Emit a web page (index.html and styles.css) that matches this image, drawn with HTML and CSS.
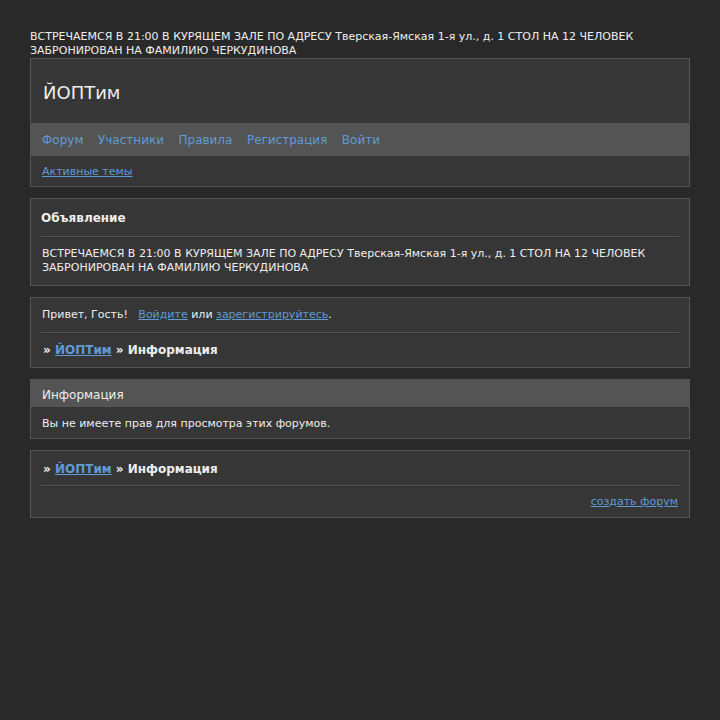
FILE: index.html
```html
<!DOCTYPE html>
<html>
<head>
<meta charset="utf-8">
<link rel="stylesheet" href="styles.css">
</head>
<body>
<div class="page">
  <div class="topnote">ВСТРЕЧАЕМСЯ В 21:00 В КУРЯЩЕМ ЗАЛЕ ПО АДРЕСУ Тверская-Ямская 1-я ул., д. 1 СТОЛ НА 12 ЧЕЛОВЕК ЗАБРОНИРОВАН НА ФАМИЛИЮ ЧЕРКУДИНОВА</div>
  <div class="box header">
    <div class="title">ЙОПТим</div>
    <div class="nav">
      <a>Форум</a><a>Участники</a><a>Правила</a><a>Регистрация</a><a>Войти</a>
    </div>
    <div class="subnav"><a class="ul">Активные темы</a></div>
  </div>

  <div class="box pad">
    <div class="heading">Объявление</div>
    <div class="rule"></div>
    <div class="announce">ВСТРЕЧАЕМСЯ В 21:00 В КУРЯЩЕМ ЗАЛЕ ПО АДРЕСУ Тверская-Ямская 1-я ул., д. 1 СТОЛ НА 12 ЧЕЛОВЕК ЗАБРОНИРОВАН НА ФАМИЛИЮ ЧЕРКУДИНОВА</div>
  </div>

  <div class="box pad">
    <div class="welcome">Привет, Гость!&nbsp;&nbsp; <a class="ul">Войдите</a> или <a class="ul">зарегистрируйтесь</a>.</div>
    <div class="rule"></div>
    <div class="crumbs">» <a class="ul">ЙОПТим</a> » Информация</div>
  </div>

  <div class="box info">
    <div class="infohead">Информация</div>
    <div class="infobody">Вы не имеете прав для просмотра этих форумов.</div>
  </div>

  <div class="box pad">
    <div class="crumbs first">» <a class="ul">ЙОПТим</a> » Информация</div>
    <div class="rule"></div>
    <div class="create"><a class="ul">создать форум</a></div>
  </div>
</div>
</body>
</html>
```

FILE: styles.css
```css
html, body {
  margin: 0;
  padding: 0;
  background: #292929;
}
body {
  font-family: "DejaVu Sans", sans-serif;
  color: #eeeeee;
  font-size: 11px;
}
.page {
  padding: 30px 30px 0 30px;
}
.topnote {
  line-height: 14px;
}
a {
  color: #5f9bd6;
  text-decoration: none;
}
a.ul {
  text-decoration: underline;
}
.box {
  background: #363636;
  border: 1px solid #545454;
  margin-bottom: 11px;
}
.title {
  font-size: 18px;
  padding: 22px 12px 19px;
  line-height: 23px;
}
.nav {
  background: #545454;
  height: 33px;
  display: flex;
  align-items: center;
  padding-left: 11px;
  gap: 14.5px;
  font-size: 12px;
}
.subnav {
  padding: 9px 11px 7px;
  line-height: 14px;
}
.pad {
  padding: 0 10px;
}
.heading {
  font-weight: bold;
  font-size: 12px;
  padding: 12px 0 10px;
  line-height: 15px;
}
.rule {
  height: 1px;
  background: #555555;
  border-bottom: 1px solid #2e2e2e;
}
.announce {
  padding: 9px 1px 10px;
  line-height: 14px;
}
.welcome {
  padding: 9px 1px 10px;
  line-height: 15px;
}
.crumbs {
  font-weight: bold;
  font-size: 12px;
  padding: 9px 2px 9px;
  line-height: 15px;
}
.crumbs.first {
  padding: 11px 2px 8px;
}
.infohead {
  background: #545454;
  font-size: 12px;
  padding: 7px 11px 4px;
  line-height: 16px;
}
.infobody {
  padding: 10px 11px 7px;
  line-height: 14px;
}
.create {
  text-align: right;
  padding: 8px 1px 8px;
  line-height: 14px;
}
```
